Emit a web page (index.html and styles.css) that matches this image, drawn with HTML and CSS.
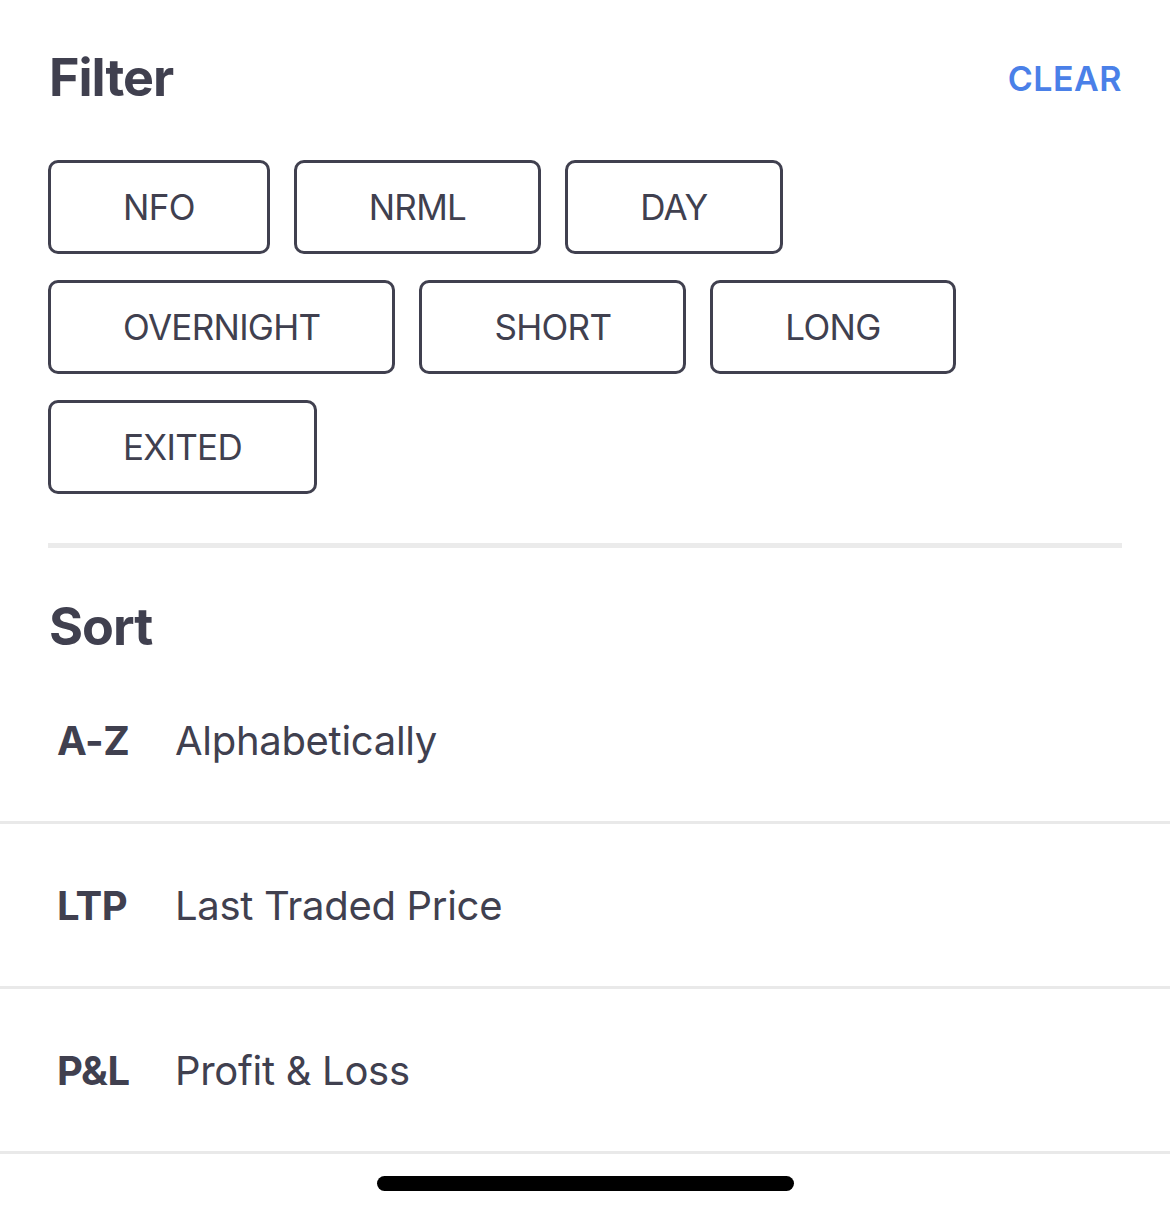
FILE: index.html
```html
<!DOCTYPE html>
<html>
<head>
<meta charset="utf-8">
<link rel="stylesheet" href="styles.css">
</head>
<body>
<div class="sheet">
  <section class="filter">
    <div class="head">
      <h1 class="title">Filter</h1>
      <span class="clear">CLEAR</span>
    </div>
    <div class="chips">
      <div class="chip-row">
        <span class="chip">NFO</span>
        <span class="chip">NRML</span>
        <span class="chip">DAY</span>
      </div>
      <div class="chip-row">
        <span class="chip">OVERNIGHT</span>
        <span class="chip">SHORT</span>
        <span class="chip">LONG</span>
      </div>
      <div class="chip-row">
        <span class="chip">EXITED</span>
      </div>
    </div>
    <div class="divider"></div>
    <h1 class="title sort-title">Sort</h1>
  </section>
  <ul class="sort-list">
    <li class="sort-row"><span class="key">A-Z</span><span class="desc">Alphabetically</span></li>
    <li class="sort-row"><span class="key">LTP</span><span class="desc">Last Traded Price</span></li>
    <li class="sort-row"><span class="key">P&amp;L</span><span class="desc">Profit &amp; Loss</span></li>
  </ul>
  <div class="home-bar"><span class="indicator"></span></div>
</div>
</body>
</html>
```

FILE: styles.css
```css
* { box-sizing: border-box; }
html, body { margin: 0; padding: 0; background: #ffffff; }
body {
  font-family: Inter, "Noto Sans", "Liberation Sans", sans-serif;
  color: #40404f;
  width: 1170px;
  height: 1215px;
  overflow: hidden;
}
.sheet { display: flex; flex-direction: column; }
.filter { padding: 52px 48px 0 48px; }
.head {
  display: flex;
  justify-content: space-between;
  align-items: baseline;
}
.title {
  margin: 0;
  font-size: 52px;
  line-height: 1;
  font-weight: 700;
  color: #40404f;
  padding-left: 1px;
  letter-spacing: -1px;
}
.clear {
  font-size: 34px;
  font-weight: 600;
  color: #4a80e8;
  letter-spacing: 0.5px;
  position: relative;
  top: -5px;
}
.chips {
  margin-top: 56px;
  display: flex;
  flex-direction: column;
  gap: 26px;
}
.chip-row { display: flex; gap: 24px; }
.chip {
  height: 94px;
  border: 3px solid #40404f;
  border-radius: 10px;
  padding: 0 72px;
  font-size: 35px;
  line-height: 88px;
  font-weight: 400;
  letter-spacing: -0.7px;
  color: #40404f;
  white-space: nowrap;
}
.divider {
  margin-top: 49px;
  height: 5px;
  background: #ebebeb;
}
.sort-title { margin-top: 53px; }
.sort-list {
  list-style: none;
  margin: 6px 0 0 0;
  padding: 0;
}
.sort-row {
  height: 165px;
  border-bottom: 3px solid #e9e9e9;
  display: flex;
  align-items: center;
  padding-left: 57px;
  font-size: 40px;
}
.key {
  width: 118px;
  font-weight: 700;
  letter-spacing: -0.5px;
  color: #40404f;
}
.desc {
  font-weight: 400;
  color: #40404f;
  letter-spacing: -0.3px;
}
.home-bar {
  display: flex;
  justify-content: center;
  padding-top: 22px;
}
.indicator {
  width: 417px;
  height: 15px;
  border-radius: 8px;
  background: #000;
}
```
